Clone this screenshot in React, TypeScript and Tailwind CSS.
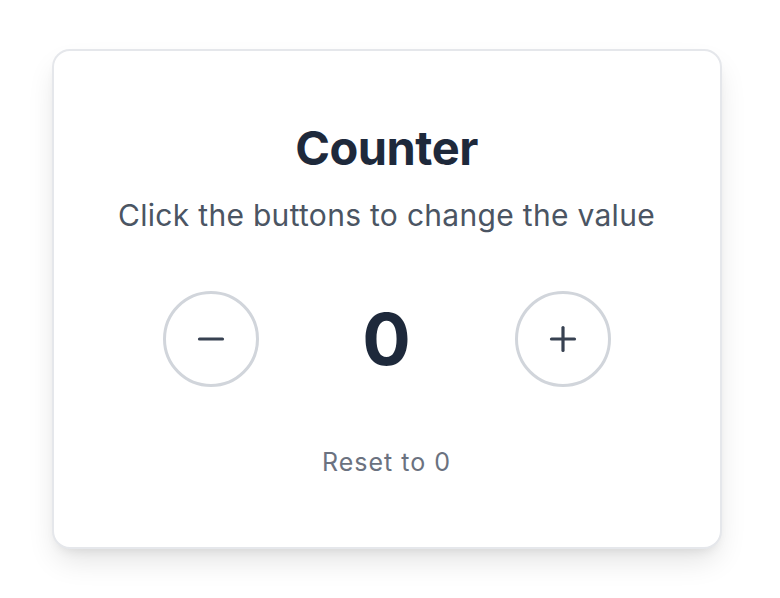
import React, { useState } from 'react';

const App: React.FC = () => {
  const [count, setCount] = useState(0);

  return (
    <div className="min-h-screen w-full flex items-center justify-center pr-[7px] bg-white font-['Inter','Liberation_Sans',sans-serif]">
      <div className="w-[670px] h-[500px] bg-white rounded-[18px] border-2 border-[#e5e7eb] shadow-[0_15px_30px_-5px_rgba(0,0,0,0.12),0_6px_12px_-6px_rgba(0,0,0,0.1)] pt-[70px] flex flex-col items-center">
        <h1 className="text-[47px] leading-[54px] font-bold text-[#1e293b] tracking-[-0.01em]">Counter</h1>
        <p className="mt-[20px] text-[30px] leading-[40px] text-[#4b5563] tracking-[0.01em]">Click the buttons to change the value</p>

        <div className="mt-[56px] flex items-center gap-[48px]">
          <button
            onClick={() => setCount(c => c - 1)}
            className="w-[96px] h-[96px] rounded-full border-[3px] border-[#d1d5db] flex items-center justify-center text-[#374151]"
          >
            <svg width="30" height="30" viewBox="0 0 30 30" fill="none" stroke="currentColor" strokeWidth="3.2" strokeLinecap="round">
              <line x1="3.5" y1="15" x2="26.5" y2="15" />
            </svg>
          </button>
          <div className="w-[160px] text-center text-[72px] leading-[80px] font-bold text-[#1e293b]">{count}</div>
          <button
            onClick={() => setCount(c => c + 1)}
            className="w-[96px] h-[96px] rounded-full border-[3px] border-[#d1d5db] flex items-center justify-center text-[#374151]"
          >
            <svg width="30" height="30" viewBox="0 0 30 30" fill="none" stroke="currentColor" strokeWidth="3.2" strokeLinecap="round">
              <line x1="3.5" y1="15" x2="26.5" y2="15" />
              <line x1="15" y1="3.5" x2="15" y2="26.5" />
            </svg>
          </button>
        </div>

        <button
          onClick={() => setCount(0)}
          className="mt-[57px] text-[25px] leading-[36px] text-[#6b7280] tracking-[0.04em]"
        >
          Reset to 0
        </button>
      </div>
    </div>
  );
};

export default App;
